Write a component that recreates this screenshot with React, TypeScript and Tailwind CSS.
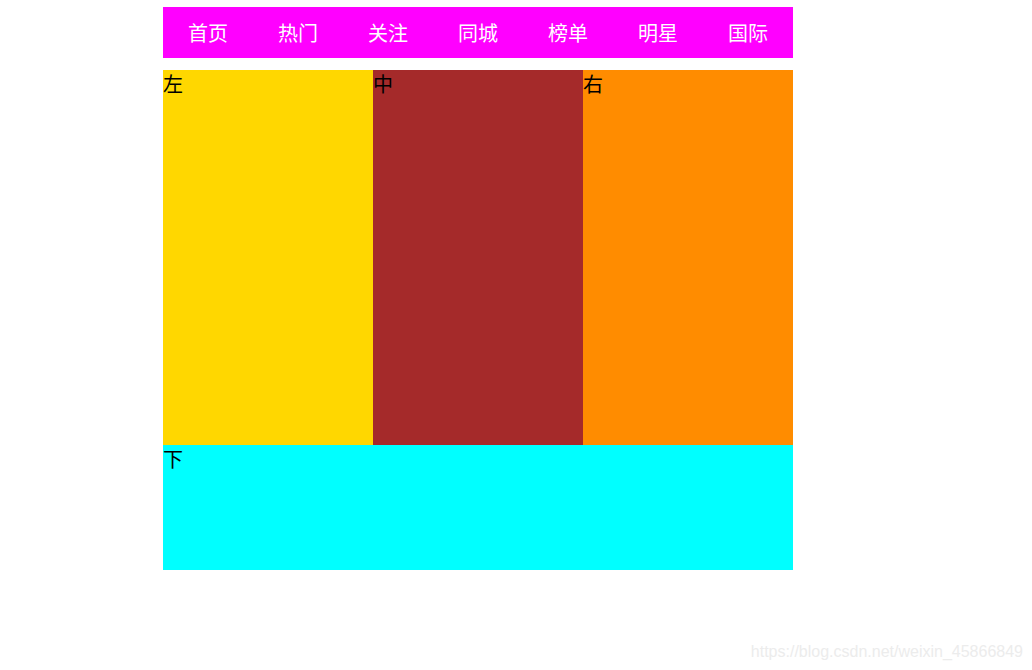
const navItems = ["首页", "热门", "关注", "同城", "榜单", "明星", "国际"];

export default function App() {
  return (
    <div
      className="relative h-[670px] w-[1032px] bg-white"
      style={{ fontFamily: '"Noto Sans CJK SC", "Noto Sans", sans-serif' }}
    >
      <div className="ml-[163px] w-[630px] pt-[7px]">
        <nav className="flex h-[51px] bg-[#ff00ff]">
          {navItems.map((item) => (
            <a
              key={item}
              className="flex w-[90px] items-center justify-center text-[20px] text-white"
            >
              {item}
            </a>
          ))}
        </nav>
        <main className="mt-[12px] flex h-[375px]">
          <div className="w-[210px] bg-[#ffd700] text-[20px] leading-[28px] text-black">左</div>
          <div className="w-[210px] bg-[#a52a2a] text-[20px] leading-[28px] text-black">中</div>
          <div className="w-[210px] bg-[#ff8c00] text-[20px] leading-[28px] text-black">右</div>
        </main>
        <footer className="h-[125px] bg-[#00ffff] text-[20px] leading-[28px] text-black">下</footer>
      </div>
      <div
        className="absolute right-[9px] bottom-[6px] text-[16px] text-[#ececec]"
        style={{ fontFamily: '"Liberation Sans", Arial, sans-serif' }}
      >
        https://blog.csdn.net/weixin_45866849
      </div>
    </div>
  );
}
